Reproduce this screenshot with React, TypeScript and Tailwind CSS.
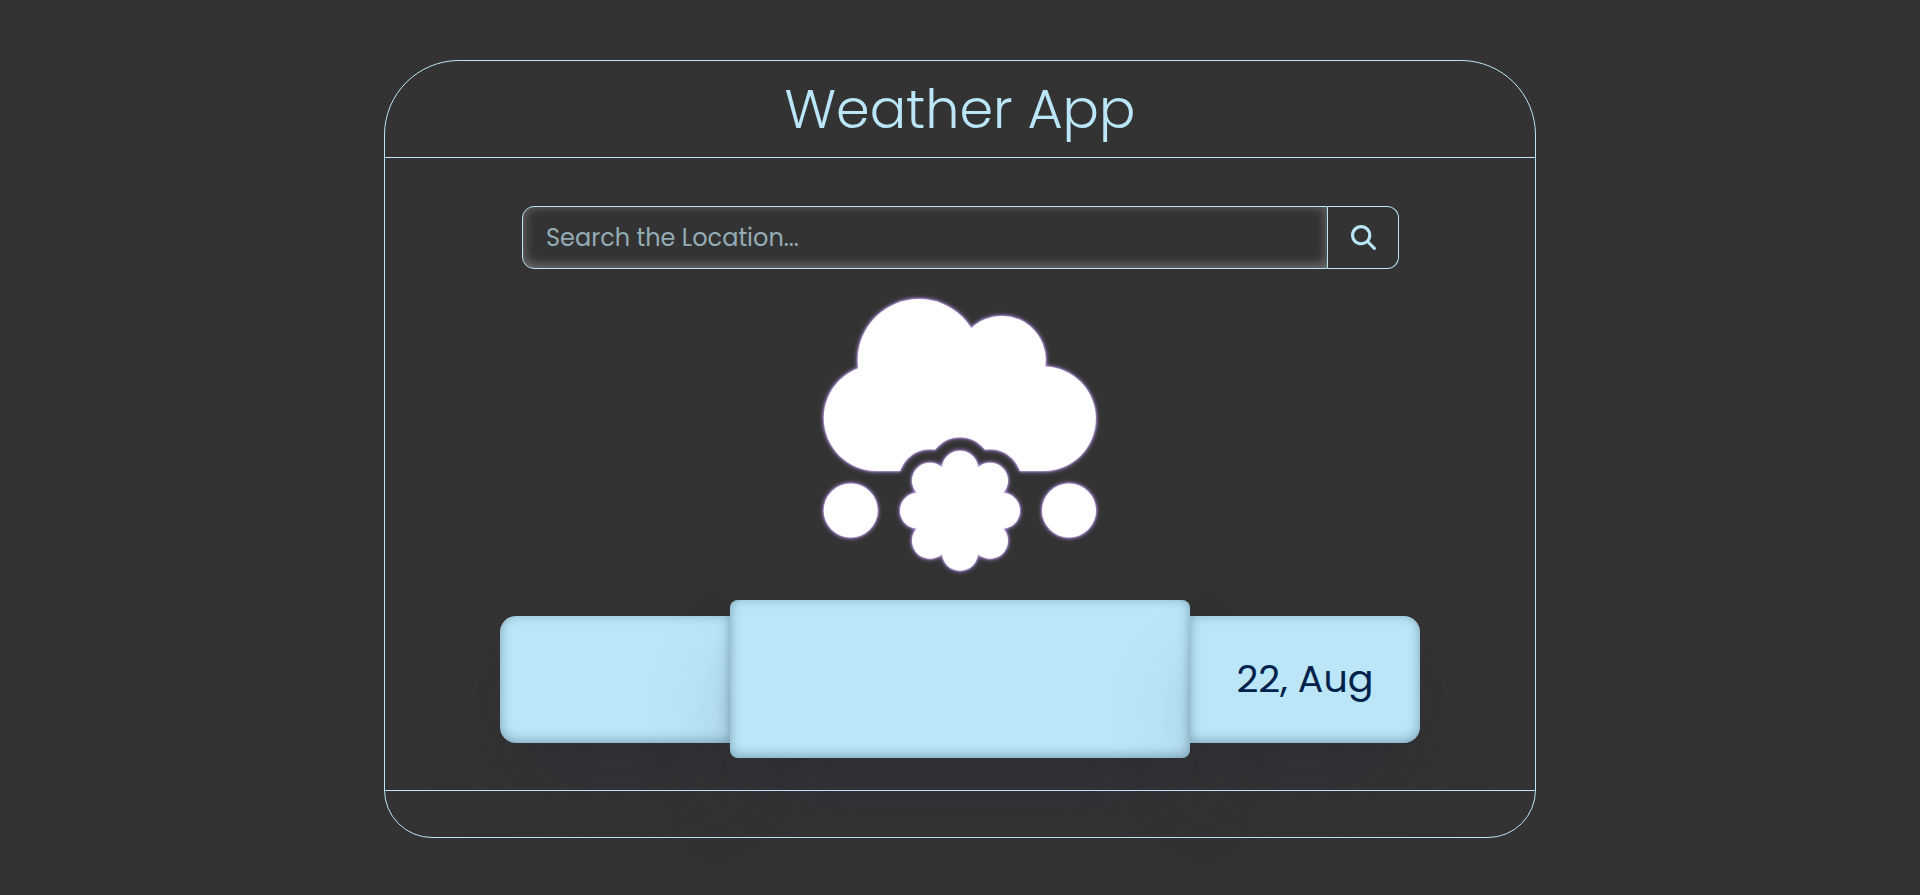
const TILE_SHADOW =
  "shadow-[0_50px_100px_-20px_rgba(50,50,93,0.25),0_30px_60px_-30px_rgba(0,0,0,0.2),inset_0_-2px_12px_rgba(10,37,64,0.35)]";

const PETALS: [number, number][] = [
  [160, 188], [190, 200], [202, 230], [190, 260],
  [160, 272], [130, 260], [118, 230], [130, 200],
];

function SnowCloud() {
  return (
    <svg
      viewBox="23 18 274 274"
      role="img"
      aria-label="Snow"
      className="mt-[29px] mb-7 size-[274px] overflow-visible fill-white [filter:drop-shadow(0_0_1px_#dcc8ff)_drop-shadow(0_0_2px_#b48cf0)]"
    >
      <mask id="flower-gap" maskUnits="userSpaceOnUse" x="0" y="0" width="320" height="310">
        <rect width="320" height="310" fill="white" />
        {PETALS.map(([x, y]) => (
          <circle key={`${x}-${y}`} cx={x} cy={y + 0.7} r="31.5" fill="black" />
        ))}
      </mask>
      <g mask="url(#flower-gap)">
        <circle cx="119" cy="80.3" r="61.3" />
        <circle cx="201.8" cy="80" r="44" />
        <circle cx="76.8" cy="138" r="53" />
        <circle cx="243.5" cy="138.7" r="52.3" />
        <path d="M77 110 120 60 202 90 243 120V191H77Z" />
      </g>
      <circle cx="160" cy="230.5" r="42" />
      {PETALS.map(([x, y]) => (
        <circle key={`${x}-${y}`} cx={x} cy={y + 0.7} r="18" />
      ))}
      <circle cx="50.7" cy="230.5" r="27" />
      <circle cx="269" cy="230.5" r="27" />
    </svg>
  );
}

export default function App() {
  return (
    <div className="flex min-h-screen justify-center bg-[#333333] py-15 font-['Poppins','Inter',sans-serif] text-[#bae6f7]">
      <div className="flex w-3/5 flex-col self-start rounded-t-[75px] rounded-b-[48px] border border-[#bae6f7]">
        <header className="flex h-[97px] items-center justify-center border-b border-[#bae6f7]">
          <h1 className="text-[54px] font-light leading-none">Weather App</h1>
        </header>
        <main className="mx-auto flex w-4/5 flex-col items-center pt-12 pb-8">
          <form className="flex h-[63px] w-full pr-[21px] pl-[22px]" onSubmit={(e) => e.preventDefault()}>
            <input
              type="text"
              aria-label="Search the Location"
              placeholder="Search the Location..."
              className="min-w-0 flex-1 rounded-l-xl border border-[#bae6f7] bg-transparent px-[23px] text-2xl shadow-[inset_0_-2px_12px_rgba(255,255,255,0.35)] outline-none placeholder:text-[#94acb5]"
            />
            <button
              type="submit"
              aria-label="Search"
              className="flex w-[71px] items-center justify-center rounded-r-xl border border-l-0 border-[#bae6f7]"
            >
              <svg viewBox="0 0 512 512" className="size-[25px] fill-current" aria-hidden="true">
                <path d="M416 208c0 45.900-14.900 88.300-40 122.700L502.600 457.400c12.500 12.500 12.500 32.800 0 45.300s-32.800 12.500-45.300 0L330.700 376c-34.400 25.200-76.800 40-122.700 40C93.100 416 0 322.900 0 208S93.100 0 208 0S416 93.100 416 208zM208 352a144 144 0 1 0 0-288 144 144 0 1 0 0 288z" />
              </svg>
            </button>
          </form>
          <SnowCloud />
          <section className="flex w-full items-center text-[38px] leading-none text-[#00224b]">
            <div className={`h-[127px] w-1/4 rounded-l-2xl bg-[#bae6f7] ${TILE_SHADOW}`} />
            <div className={`h-[158px] w-1/2 rounded-lg bg-[#bae6f7] ${TILE_SHADOW}`} />
            <div className={`flex h-[127px] w-1/4 items-center justify-center rounded-r-2xl bg-[#bae6f7] ${TILE_SHADOW}`}>
              22, Aug
            </div>
          </section>
        </main>
        <footer className="h-[47px] border-t border-[#bae6f7]" />
      </div>
    </div>
  );
}
